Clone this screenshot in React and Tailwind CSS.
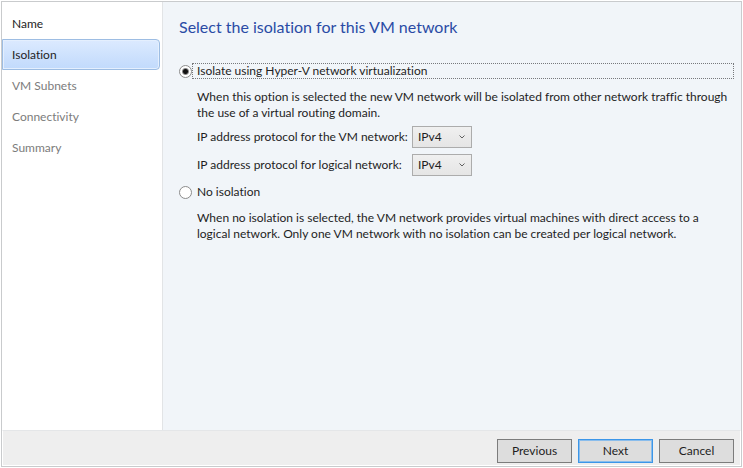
import { useState } from "react";

const steps = [
  { name: "Name", state: "done" },
  { name: "Isolation", state: "current" },
  { name: "VM Subnets", state: "pending" },
  { name: "Connectivity", state: "pending" },
  { name: "Summary", state: "pending" },
];

const stepStyles = {
  done: "border-transparent text-[#1e1e1e]",
  current:
    "border-[#9dbde3] bg-linear-to-b from-[#dceaff] to-[#c1dafc] text-[#1e1e1e] shadow-[inset_0_0_0_1px_#e4effe]",
  pending: "border-transparent text-[#7c7c7c]",
};

function Steps() {
  return (
    <nav className="w-[161px] shrink-0 border-r border-[#e2e4e6] bg-white pt-[6px] pr-[2px]">
      <ol>
        {steps.map((step) => (
          <li key={step.name}>
            <a
              href="#"
              aria-current={step.state === "current" ? "step" : undefined}
              className={`flex h-[31px] items-center rounded-r-sm border pl-[9px] ${stepStyles[step.state]}`}
            >
              {step.name}
            </a>
          </li>
        ))}
      </ol>
    </nav>
  );
}

function Radio({ id, label, checked, onChange, focused }) {
  return (
    <div className="flex items-center">
      <input
        type="radio"
        id={id}
        name="isolation"
        checked={checked}
        onChange={onChange}
        className="size-[13px] shrink-0 appearance-none rounded-full border border-[#8c8c8c] bg-white checked:bg-[radial-gradient(circle,#111_2px,#fff_4px)]"
      />
      <label
        htmlFor={id}
        className={`flex h-4 grow items-center border border-dotted pl-1 ${focused ? "border-[#77797c]" : "border-transparent"}`}
      >
        {label}
      </label>
    </div>
  );
}

function Protocol({ id, label }) {
  return (
    <div className="flex items-center">
      <label htmlFor={id} className="w-[215px] shrink-0 whitespace-nowrap">
        {label}
      </label>
      <div className="grid h-[22px] w-[60px] items-center">
        <select
          id={id}
          defaultValue="IPv4"
          className="col-start-1 row-start-1 size-full appearance-none border border-[#acacac] bg-linear-to-b from-[#f0f0f0] to-[#e5e5e5] pl-[5px]"
        >
          <option>IPv4</option>
          <option>IPv6</option>
        </select>
        <svg
          viewBox="0 0 6 4"
          className="pointer-events-none col-start-1 row-start-1 mr-[7px] h-1 w-[6px] justify-self-end"
          fill="none"
          stroke="#606060"
          aria-hidden="true"
        >
          <path d="M0.5 0.5 3 3 5.5 0.5" />
        </svg>
      </div>
    </div>
  );
}

function FooterButton({ primary, children }) {
  return (
    <button
      type="button"
      className={`flex h-6 w-[75px] items-center justify-center border bg-[#dddddd] ${primary ? "border-[#3c96e8] shadow-[inset_0_0_0_1px_#8abdec]" : "border-[#7c7c7c]"}`}
    >
      {children}
    </button>
  );
}

export default function App() {
  const [mode, setMode] = useState("isolate");
  return (
    <div className="flex min-h-screen flex-col bg-white p-px font-[Lato,'Noto_Sans',sans-serif] text-xs text-[#1e1e1e] [font-variant-ligatures:none]">
      <div className="flex grow flex-col border border-[#c9cbcd]">
        <div className="flex grow">
          <Steps />
          <main className="min-w-0 grow bg-[#f1f5f9] pt-[11px] pr-[7px] pl-4">
            <h1 className="text-base leading-7 text-[#2a4ba5]">
              Select the isolation for this VM network
            </h1>
            <form className="pt-[22px]">
              <Radio
                id="isolate"
                label="Isolate using Hyper-V network virtualization"
                checked={mode === "isolate"}
                onChange={() => setMode("isolate")}
                focused
              />
              <p className="pt-[10px] pl-[18px]">
                When this option is selected the new VM network will be isolated from other network traffic through
                the use of a virtual routing domain.
              </p>
              <div className="flex flex-col gap-[6px] pt-[5px] pb-[8px] pl-[18px]">
                <Protocol id="vm-protocol" label="IP address protocol for the VM network:" />
                <Protocol id="logical-protocol" label="IP address protocol for logical network:" />
              </div>
              <Radio
                id="none"
                label="No isolation"
                checked={mode === "none"}
                onChange={() => setMode("none")}
              />
              <p className="pt-[10px] pl-[18px]">
                When no isolation is selected, the VM network provides virtual machines with direct access to a
                <br />
                logical network. Only one VM network with no isolation can be created per logical network.
              </p>
            </form>
          </main>
        </div>
        <footer className="border border-white border-t-[#e4e6e8] bg-[#eeeeee]">
          <div className="flex justify-end gap-[6px] pt-2 pr-[6px] pb-[2px]">
            <FooterButton>Previous</FooterButton>
            <FooterButton primary>Next</FooterButton>
            <FooterButton>Cancel</FooterButton>
          </div>
        </footer>
      </div>
    </div>
  );
}
